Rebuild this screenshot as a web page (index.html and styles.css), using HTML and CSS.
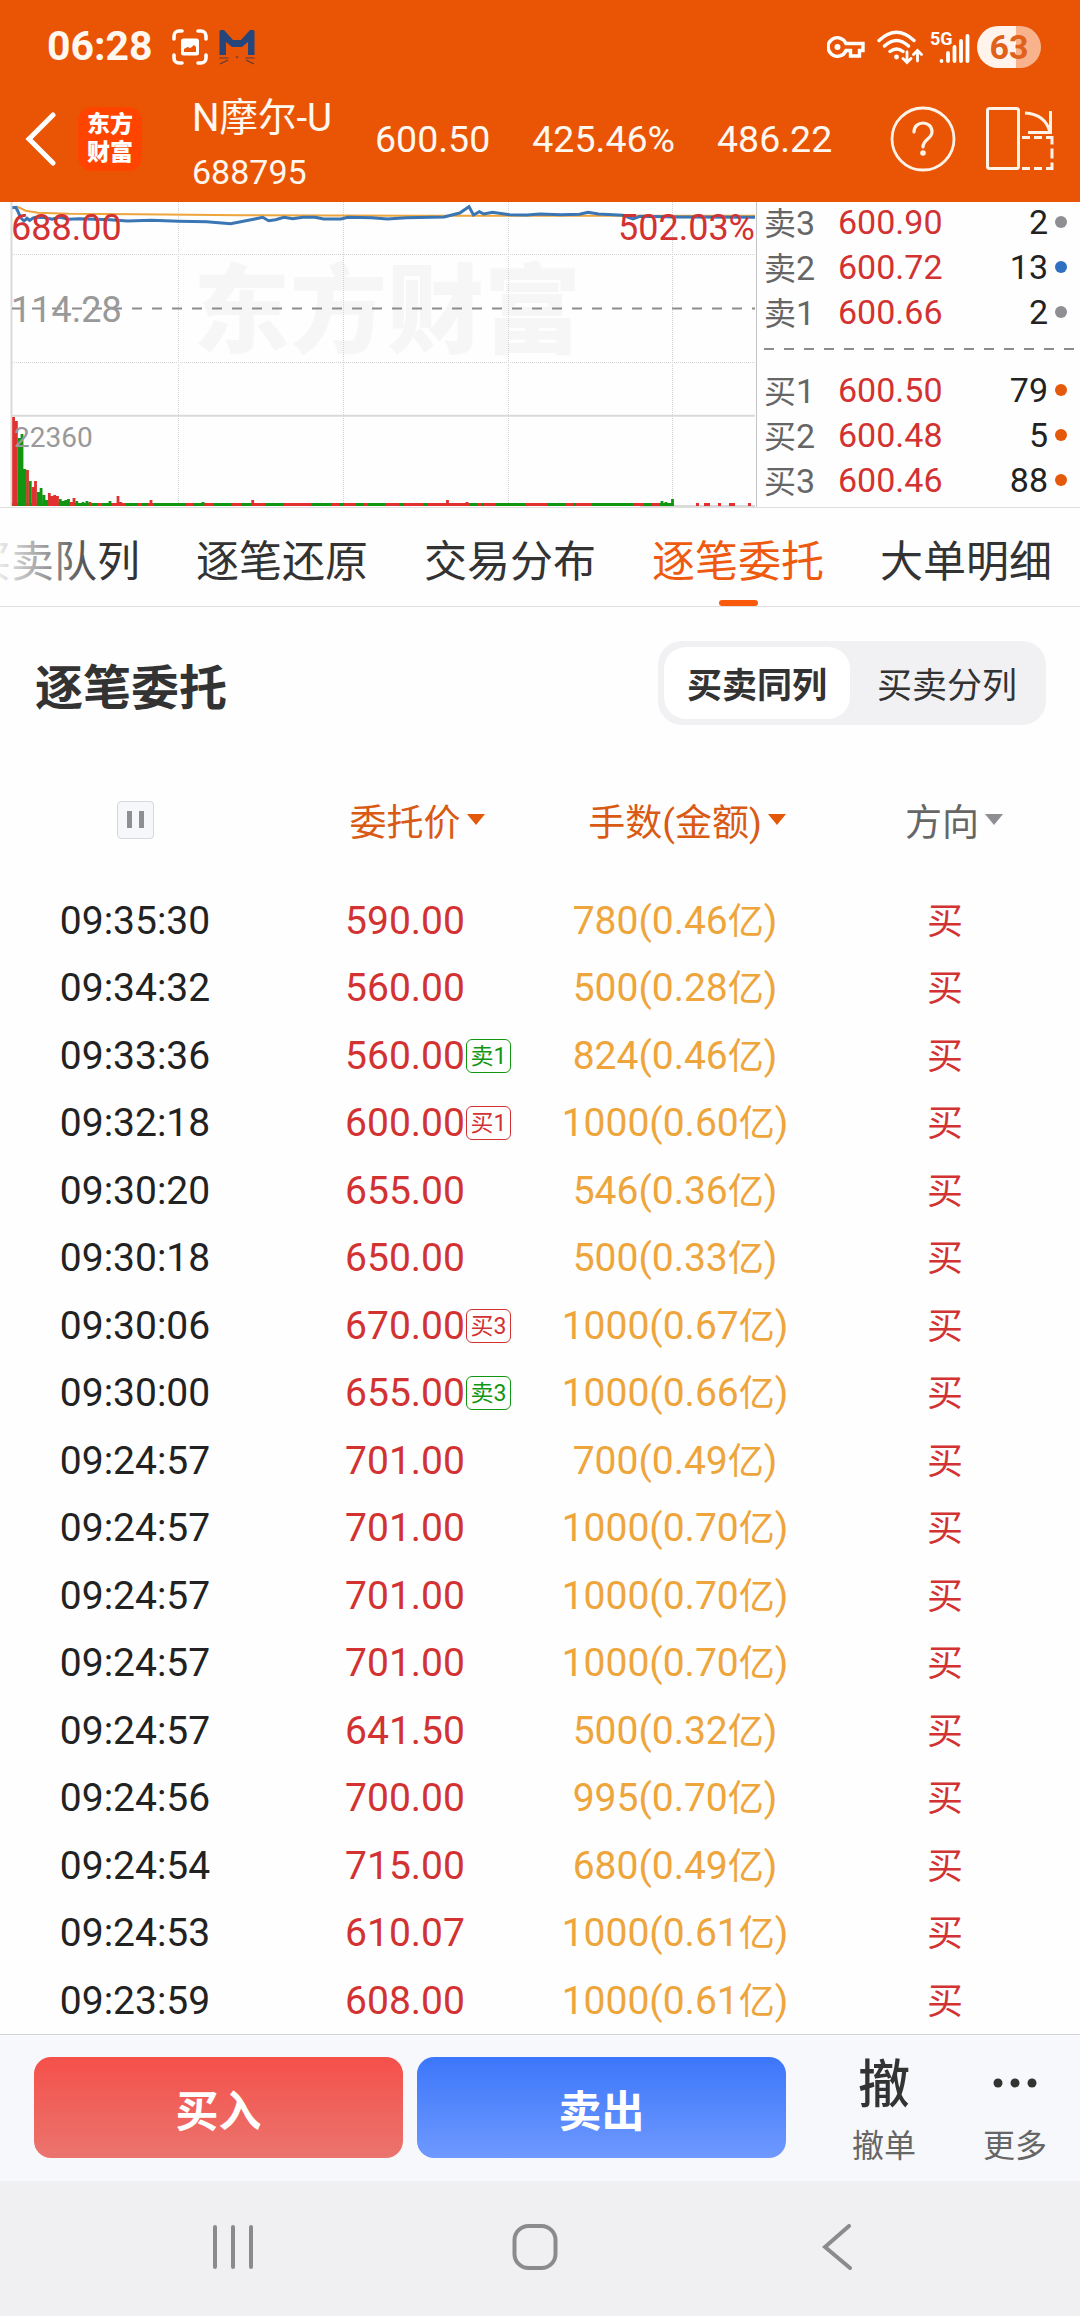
FILE: index.html
```html
<!DOCTYPE html>
<html lang="zh-CN">
  <head>
    <meta charset="UTF-8" />
    <title>N摩尔-U 688795</title>
    <link rel="stylesheet" href="styles.css">
  </head>
  <body>
    <header class="top">
      <div class="status-bar">
        <span class="clock">06:28</span>
        <svg class="icon-capture" width="36" height="36" viewBox="0 0 36 36">
          <path d="M2 10V7a5 5 0 0 1 5-5h3M26 2h3a5 5 0 0 1 5 5v3M34 26v3a5 5 0 0 1-5 5h-3M10 34H7a5 5 0 0 1-5-5v-3" fill="none" stroke="#fff" stroke-width="3.6" stroke-linecap="round" />
          <rect x="9" y="9.500" width="18" height="17" rx="2.500" fill="#fff" />
          <path d="M12 23v-3l3.500-2 3 1 3.500-3 2 2v5z" fill="#e95504" />
        </svg>
        <svg class="icon-m" width="36" height="36" viewBox="0 0 36 36">
          <path d="M.5 26V2.500Q.5 1 2 1h3l9 10h8l9-10h3q1.500 0 1.500 1.500V26H29V13l-6 5H13l-6-5v13z" fill="#26457a" />
          <path d="M.5 29h9M1 35l8-4M35.500 29h-9M35 35l-8-4" stroke="#5a3a40" stroke-width="1.200" />
          <path d="M16.500 27.500h3L18 29.500z" fill="#5a3a40" />
        </svg>
        <div class="status-right">
          <svg class="icon-key" width="38" height="22" viewBox="0 0 38 22">
            <path d="M19 7.500A9.300 9.300 0 1 0 19 14.500h4.500V20h9v-5.500H36v-7z" fill="none" stroke="#fff" stroke-width="3.400" />
            <circle cx="10.500" cy="11" r="3" fill="#fff" />
          </svg>
          <svg class="icon-wifi" width="46" height="35" viewBox="0 0 46 35">
            <g fill="none" stroke="#fff" stroke-width="3.400" stroke-linecap="round">
              <path d="M2 10.500Q19.500-6 37 10.500M7.500 16Q19.500 5 31.500 16M13 21.500q6.500-5 13 0" />
              <path d="M30 22v10M26 28.500l4 4 4-4M40.500 31V21M36.500 24.500l4-4 4 4" stroke-width="2.800" />
            </g>
            <circle cx="19.500" cy="27" r="2.400" fill="#fff" />
          </svg>
          <svg class="icon-signal" width="40" height="34" viewBox="0 0 40 34">
            <text x="0" y="14.500" class="net">5G</text>
            <path d="M11.500 31v.100M18 31v-8M24.500 31V17M31 31V11M37.500 31V6" fill="none" stroke="#fff" stroke-width="3.800" stroke-linecap="round" />
          </svg>
          <span class="battery">63</span>
        </div>
      </div>

      <div class="stock-bar">
        <svg class="icon-back" width="32" height="54" viewBox="0 0 32 54">
          <path d="M28 3L4 27l24 24" fill="none" stroke="#fff" stroke-width="5" stroke-linecap="round" />
        </svg>
        <div class="logo"><span>东方</span><span>财富</span></div>
        <div class="stock-name">
          <div class="name">N摩尔-U</div>
          <div class="code">688795</div>
        </div>
        <span class="quote">600.50</span>
        <span class="quote">425.46%</span>
        <span class="quote">486.22</span>
        <svg class="icon-help" width="66" height="66" viewBox="0 0 66 66">
          <g fill="none" stroke="#fff3e8" stroke-width="2.800">
            <circle cx="33" cy="33" r="31" />
            <path d="M24 26c0-12 18-12 18 0 0 7-9 7-9 15" stroke-width="3.200" stroke-linecap="round" />
          </g>
          <circle cx="33" cy="47" r="2.800" fill="#fff3e8" />
        </svg>
        <svg class="icon-rotate" width="68" height="64" viewBox="0 0 68 64">
          <g fill="none" stroke="#fff3e8" stroke-width="3">
            <rect x="1.500" y="1.500" width="31" height="60" rx="2" />
            <path d="M39 6q20 1 25 19M64.500 4v21.500H42" />
            <path d="M36 30.500h8m4 0h8m4 0h6v7m0 4v10m0 4v6h-6m-4 0h-8m-4 0h-8" />
          </g>
        </svg>
      </div>
    </header>

    <section class="market">
      <svg class="chart" width="757" height="305" viewBox="0 0 757 305">
        <g class="watermark">
          <text x="193" y="143">东方财富</text>
        </g>
        <path class="grid" d="M178.500 0v304M343.500 0v304M508.500 0v304M672.500 0v304M12 52.500h743M12 160.500h743" />
        <path class="axis" d="M11.500 0v304M11 213.700h744M640 304h115" />
        <path d="M756.500 0v305" stroke="#c4c4c4" />
        <path class="middle" d="M12 106.500h743" />

        <!-- volume -->
        <path class="vol-down" d="M12 302.500H674" stroke-width="3" />
        <path class="vol-up" stroke-width="3" d="M97 302.500h5M112 302.500h14M138 302.500h4M148 302.500h6M186 302.500h7M204 302.500h9M231 302.500h10M251 302.500h14M283 302.500h28M331 302.500h8M343 302.500h13M363 302.500h5M385 302.500h14M403 302.500h20M427 302.500h43M477 302.500h4M484 302.500h11M525 302.500h22M565 302.500h8M576 302.500h16M633 302.500h11M652 302.500h8M696 302.500h3M704 302.500h6M718 302.500h3M729 302.500h6M748 302.500h3" />
        <path class="vol-up" d="M13.600 304v-89M16.400 304v-85M27.500 304v-36M33 304v-19M35.500 304v-25M49.300 304v-13M52 304v-10M54.700 304v-11M57.500 304v-10M71.300 304v-4M74 304v-8M90 304v-4M118 304v-10M120.800 304v-4M151 304v-6M252.700 304v-6M447.500 304v-6M467 304v-4" />
        <path class="vol-down" d="M19.200 304v-68M22 304v-72M24.800 304v-37M30.300 304v-25M38.300 304v-14M41.100 304v-18M44 304v-11M46.700 304v-6M60.300 304v-7M63 304v-5M65.800 304v-6M68.500 304v-7M76.800 304v-5M83 304v-4M87 304v-5M110 304v-5M203 304v-4M662 304v-5M666 304v-4M672.500 304v-7" />

        <!-- average and price -->
        <path class="line-avg" d="M17 4.700L20 6 25.800 8.700 38 10.700 69 11.700 137.700 12.300 241 13.300 413 13.700H755" />
        <path class="line-price" d="M12.400 5.700L15.800 5.300 17.200 8 20.700 15.700 24 19 27 16.300 29.600 18.300 33.700 15.700 43 15.300 52 17.300 60 15.300 69 17.300 79 16.700 110 17.700 127.400 19 151.500 18.300 179 19.300 206.600 19.700 230.700 21.700 244.500 19 254.800 17 262.700 15.300 268.600 18.700 275.500 17.700 284 15.300 292.700 16.700 303 15.300 315 15.300 323.700 17 341 17 347.800 15.300 372 15.700 387.400 17 406.300 15.700 444 15 459.700 11 469 4.700 473.500 13 479.300 9.700 483.800 12 492.400 10.300 509.600 12.700 527 13 540 12 560.700 12.700 579.600 12.300 588 10.300 598.500 12 622.600 13.300 633 17 640 14.300 678 15 755 15.300" />

        <text class="label up" x="11" y="38">688.00</text>
        <text class="label up" x="755" y="38" text-anchor="end">502.03%</text>
        <text class="label" x="11" y="120">114.28</text>
        <text class="label small" x="14" y="245">22360</text>
      </svg>

      <div class="order-book">
        <div class="level"><span>卖<b>3</b></span><em>600.90</em><i>2</i><u></u></div>
        <div class="level"><span>卖<b>2</b></span><em>600.72</em><i>13</i><u class="blue"></u></div>
        <div class="level"><span>卖<b>1</b></span><em>600.66</em><i>2</i><u></u></div>
        <svg class="divider" width="311" height="2"><path d="M0 1h311" /></svg>
        <div class="level"><span>买<b>1</b></span><em>600.50</em><i>79</i><u class="orange"></u></div>
        <div class="level"><span>买<b>2</b></span><em>600.48</em><i>5</i><u class="orange"></u></div>
        <div class="level"><span>买<b>3</b></span><em>600.46</em><i>88</i><u class="orange"></u></div>
      </div>
    </section>

    <nav class="tabs">
      <a>买卖队列</a>
      <a>逐笔还原</a>
      <a>交易分布</a>
      <a class="active">逐笔委托</a>
      <a>大单明细</a>
    </nav>

    <main>
      <div class="title-row">
        <h2>逐笔委托</h2>
        <div class="switch">
          <span class="on">买卖同列</span>
          <span>买卖分列</span>
        </div>
      </div>

      <div class="list-head">
        <div><span class="pause"></span></div>
        <div class="sort">委托价</div>
        <div class="sort">手数(金额)</div>
        <div class="sort gray">方向</div>
      </div>
      <div class="list" id="order-list"></div>
    </main>

    <footer class="trade-bar">
      <button class="buy">买入</button>
      <button class="sell">卖出</button>
      <div class="action">
        <span class="action-icon">撤</span>
        <span>撤单</span>
      </div>
      <div class="action more">
        <span class="action-icon">
          <svg width="44" height="10" viewBox="0 0 44 10">
            <circle cx="5" cy="5" r="4.500" />
            <circle cx="22" cy="5" r="4.500" />
            <circle cx="39" cy="5" r="4.500" />
          </svg>
        </span>
        <span>更多</span>
      </div>
    </footer>

    <div class="system-nav">
      <svg width="40" height="44" viewBox="0 0 40 44"><path d="M2 2v40M20 2v40M38 2v40" /></svg>
      <svg class="home" width="46" height="46" viewBox="0 0 46 46"><rect x="2.500" y="2" width="41" height="42" rx="14" /></svg>
      <svg width="30" height="46" viewBox="0 0 30 46"><path d="M27 2L3 23l25 21" /></svg>
    </div>

    <script>
      const orders = [
        ["09:35:30", "590.00", "780", "0.46"],
        ["09:34:32", "560.00", "500", "0.28"],
        ["09:33:36", "560.00", "824", "0.46", "卖1"],
        ["09:32:18", "600.00", "1000", "0.60", "买1"],
        ["09:30:20", "655.00", "546", "0.36"],
        ["09:30:18", "650.00", "500", "0.33"],
        ["09:30:06", "670.00", "1000", "0.67", "买3"],
        ["09:30:00", "655.00", "1000", "0.66", "卖3"],
        ["09:24:57", "701.00", "700", "0.49"],
        ["09:24:57", "701.00", "1000", "0.70"],
        ["09:24:57", "701.00", "1000", "0.70"],
        ["09:24:57", "701.00", "1000", "0.70"],
        ["09:24:57", "641.50", "500", "0.32"],
        ["09:24:56", "700.00", "995", "0.70"],
        ["09:24:54", "715.00", "680", "0.49"],
        ["09:24:53", "610.07", "1000", "0.61"],
        ["09:23:59", "608.00", "1000", "0.61"],
      ];

      let html = "";
      orders.forEach(([time, price, lots, amount, tag]) => {
        const tagClass = tag && tag[0] === "卖" ? "tag green" : "tag";
        html += `
          <div class="row">
            <div>${time}</div>
            <div class="price"><span>${price}${
          tag ? `<span class="${tagClass}">${tag}</span>` : ""
        }</span></div>
            <div class="lots">${lots}(${amount}<small>亿</small>)</div>
            <div class="side">买</div>
          </div>
        `;
      });
      document.getElementById("order-list").innerHTML = html;
    </script>
  </body>
</html>
```
FILE: styles.css
```css
* {
  box-sizing: border-box;
}

body {
  margin: 0;
  width: 1080px;
  height: 2316px;
  overflow: hidden;
  display: flex;
  flex-direction: column;
  background: #fefefe;
  color: #222;
  font-family: Roboto, "Noto Sans CJK SC", sans-serif;
  line-height: 1.2;
}

svg {
  display: block;
  flex: none;
}

/* header */
.top {
  height: 202px;
  flex: none;
  background: #e95504;
  color: #fff8f0;
}

.status-bar {
  height: 76px;
  padding: 18px 39px 0 47px;
  display: flex;
  align-items: center;
}

.clock {
  width: 125px;
  font-size: 41px;
  font-weight: 700;
}

.icon-m {
  margin-left: 11px;
}

.status-right {
  margin-left: auto;
  display: flex;
  align-items: center;
}

.icon-wifi {
  margin-left: 12px;
}

.icon-signal {
  margin-left: 7px;
  overflow: visible;
}

.net {
  font-size: 18px;
  font-weight: 700;
  fill: #fff;
}

.battery {
  width: 64px;
  height: 42px;
  margin-left: 7px;
  border-radius: 21px;
  background: linear-gradient(90deg, #fff3ec 61%, #f8b38c 61%);
  color: #e0611c;
  font-size: 34px;
  font-weight: 700;
  line-height: 43px;
  text-align: center;
}

.stock-bar {
  height: 126px;
  padding-left: 25px;
  display: flex;
  align-items: center;
}

.logo {
  width: 64px;
  height: 64px;
  margin-left: 21px;
  border-radius: 14px;
  background: #ff4400;
  color: #fff;
  display: flex;
  flex-direction: column;
  align-items: center;
  justify-content: center;
  font-size: 23px;
  font-weight: 900;
  line-height: 28px;
}

.stock-name {
  width: 183px;
  margin-left: 50px;
  padding-top: 10px;
}

.name {
  font-size: 38.5px;
  line-height: 55px;
  white-space: nowrap;
}

.code {
  font-size: 34px;
  line-height: 54px;
}

.quote {
  padding-top: 1px;
  font-size: 37.5px;
  margin-right: 42px;
}

.icon-help {
  margin-left: 16px;
}

.icon-rotate {
  margin-left: 30px;
}

/* chart + order book */
.market {
  height: 305px;
  flex: none;
  display: flex;
}

.chart {
  fill: none;
}

.watermark text {
  fill: #f6f6f6;
  font-size: 97px;
  font-weight: 900;
}

.grid {
  stroke: #d4d4d4;
  stroke-dasharray: 1 1;
}

.axis {
  stroke: #d9d9d9;
  stroke-width: 2;
}

.middle,
.divider path {
  stroke: #8c8c8c;
  stroke-width: 2;
  stroke-dasharray: 10 10;
}

.vol-up {
  stroke: #e03030;
  stroke-width: 2.8;
}

.vol-down {
  stroke: #119611;
  stroke-width: 2.8;
}

.line-avg {
  stroke: #eda53c;
  stroke-width: 2;
}

.line-price {
  stroke: #3a75b4;
  stroke-width: 3;
}

.label {
  fill: #999;
  font-size: 36px;
}

.label.up {
  fill: #d23232;
}

.label.small {
  font-size: 28px;
}

.order-book {
  flex: 1;
  padding-left: 7px;
  font-size: 34px;
}

.level {
  height: 45px;
  display: flex;
  align-items: center;
  line-height: 41px;
}

.level:first-child {
  margin-top: -2px;
}

.level span {
  width: 74px;
  padding-top: 3px;
  color: #666;
  font-size: 32px;
}

.level b {
  font-size: 34px;
  font-weight: 400;
}

.level em {
  color: #d23232;
  font-style: normal;
}

.level i {
  margin-left: auto;
  font-style: normal;
}

.level u {
  width: 12px;
  height: 12px;
  margin: 0 13px 2px 7px;
  border-radius: 50%;
  background: #8e8e93;
}

.level u.blue {
  background: #2f71c0;
}

.level u.orange {
  background: #e55a0a;
}

.order-book .divider {
  margin: 13px 0 18px;
}

/* tabs */
.tabs {
  position: relative;
  height: 100px;
  flex: none;
  border-top: 1px solid #dfdfdf;
  border-bottom: 1px solid #dfdfdf;
  display: flex;
  gap: 56px;
  overflow: hidden;
}

.tabs a {
  flex: none;
  color: #333;
  font-size: 43px;
  line-height: 109px;
  position: relative;
}

.tabs a:first-child {
  margin-left: -32px;
}

.tabs::before {
  content: "";
  position: absolute;
  z-index: 1;
  left: 0;
  top: 0;
  width: 105px;
  height: 98px;
  background: linear-gradient(90deg, rgba(254, 254, 254, 0.9), rgba(254, 254, 254, 0));
}

.tabs .active {
  color: #ee5a10;
}

.tabs .active::after {
  content: "";
  position: absolute;
  left: 67px;
  bottom: 0;
  width: 39px;
  height: 6px;
  border-radius: 3px;
  background: #fa5a0c;
}

/* list */
main {
  height: 1427px;
  flex: none;
  overflow: hidden;
}

.title-row {
  height: 152px;
  padding: 0 34px 0 35px;
  display: flex;
  align-items: center;
  justify-content: space-between;
}

h2 {
  margin: 12px 0 0;
  color: #333;
  font-size: 48px;
  font-weight: 700;
}

.switch {
  width: 388px;
  height: 84px;
  padding: 6px;
  border-radius: 24px;
  background: #f1f1f4;
  display: flex;
  color: #333;
  font-size: 35px;
}

.switch span {
  width: 186px;
  border-radius: 22px;
  line-height: 80px;
  height: 72px;
  text-align: center;
}

.switch span + span {
  margin-left: 4px;
}

.switch .on {
  background: #fff;
  font-weight: 700;
}

.list-head,
.row {
  display: grid;
  grid-template-columns: repeat(4, 270px);
  justify-items: center;
  align-items: center;
}

.list-head {
  height: 128.5px;
  padding-top: 1px;
  font-size: 37px;
}

.pause {
  display: block;
  width: 37px;
  height: 38px;
  margin-bottom: 7px;
  border: 1px solid #d5d8de;
  border-radius: 4px;
  background:
    linear-gradient(#8e8e93, #8e8e93) 9px 9px / 5px 17px no-repeat,
    linear-gradient(#8e8e93, #8e8e93) 21px 9px / 5px 17px no-repeat,
    #f6f7fa;
}

.sort {
  position: relative;
  color: #d95a14;
}

.sort::after {
  content: "";
  position: absolute;
  left: 100%;
  top: 12px;
  margin-left: 6px;
  border: 9px solid transparent;
  border-top: 11px solid #e4580a;
  border-bottom: 0;
}

.sort.gray {
  color: #666;
  right: 3px;
}

.sort.gray::after {
  border-top-color: #8e8e93;
}

.row {
  height: 67.5px;
  font-size: 39px;
}

.price {
  color: #d23232;
}

.price > span {
  position: relative;
}

.tag {
  position: absolute;
  left: 100%;
  top: 6px;
  width: 45px;
  height: 34px;
  margin-left: 1px;
  border: 1px solid #d23232;
  border-radius: 6px;
  font-size: 23px;
  line-height: 33px;
  text-align: center;
}

.tag.green {
  border-color: #119611;
  color: #119611;
}

.lots {
  color: #eda53c;
}

.lots small {
  font-size: 36px;
}

.side {
  padding-top: 2px;
  color: #d23232;
  font-size: 36px;
}

/* bottom */
.trade-bar {
  height: 147px;
  flex: none;
  padding: 22px 0 0 34px;
  border-top: 1px solid #d2d3d5;
  background: #f7f8fb;
  display: flex;
  align-items: flex-start;
}

.trade-bar button {
  width: 369px;
  height: 101px;
  padding: 1px 0 0;
  border: 0;
  border-radius: 17px;
  color: #fff;
  font-family: inherit;
  font-size: 43px;
  font-weight: 600;
}

.trade-bar .buy {
  margin-right: 14px;
  background: linear-gradient(#f5504a, #eb746e);
}

.trade-bar .sell {
  background: linear-gradient(#3c76fa, #6e99ff);
}

.action {
  width: 66px;
  margin-left: 65px;
  color: #666;
  font-size: 32px;
  text-align: center;
  white-space: nowrap;
}

.action span {
  display: block;
}

.action .action-icon {
  height: 70px;
  color: #333;
  font-size: 52px;
  font-weight: 500;
  line-height: 57px;
}

.action svg {
  fill: #333;
  margin: 0 auto;
  position: relative;
  top: 21px;
}

.more {
  margin-left: 65px;
}

.system-nav {
  flex: 1;
  padding: 0 228px 4px 213px;
  background: #f0f0f2;
  display: flex;
  align-items: center;
  justify-content: space-between;
}

.system-nav .home {
  margin-right: 5px;
}

.system-nav svg {
  fill: none;
  stroke: #8b8b8b;
  stroke-width: 4;
  stroke-linecap: round;
}
```
